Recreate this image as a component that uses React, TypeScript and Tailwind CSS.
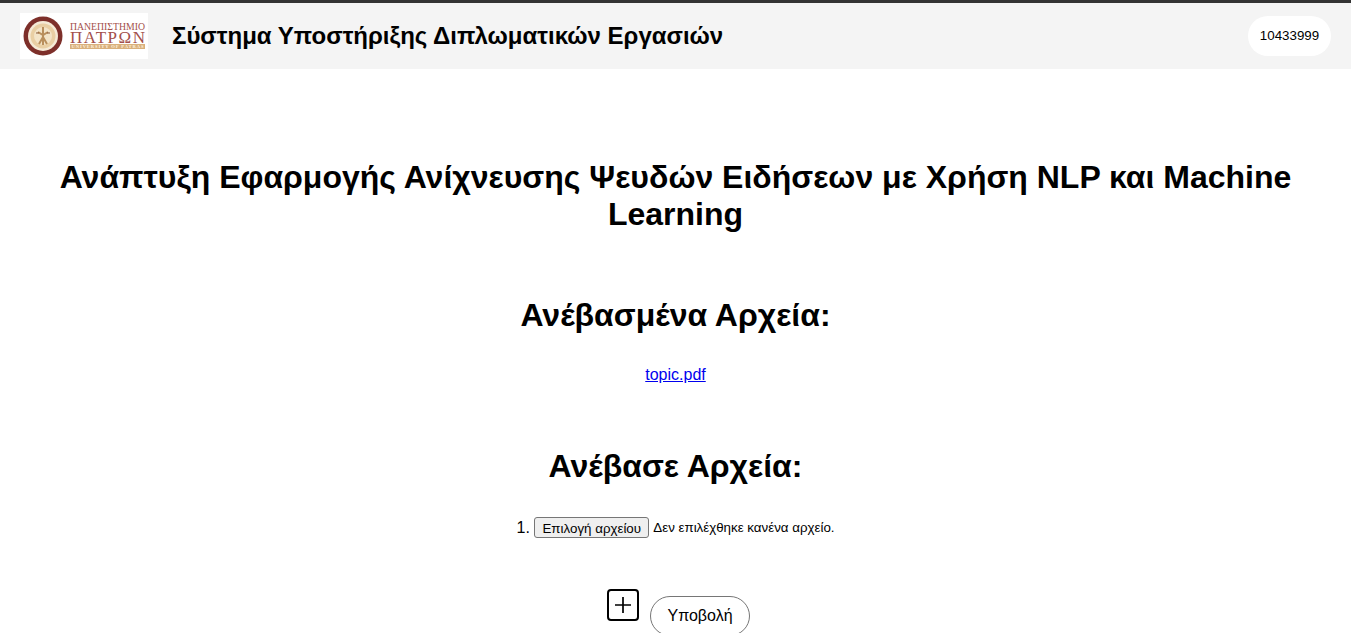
const font = "font-['Liberation_Sans',Arial,sans-serif]";

// University seal + wordmark, drawn small like the original raster logo
const Logo = () => (
  <svg width="128" height="46" viewBox="0 0 128 46" className="shrink-0 bg-white">
    <circle cx="23" cy="23" r="19.5" fill="#7d2f2a" />
    <circle cx="23" cy="23" r="15" fill="#f5ead6" />
    <circle cx="23" cy="23" r="12.5" fill="#e9cfa4" />
    <circle cx="23" cy="23" r="9" fill="#f3e4c8" />
    <path d="M23 14v18M18 19l5 3 5-3M19 31l4-7 4 7" stroke="#b98f5c" strokeWidth="2" fill="none" />
    <path d="M16 20h3M27 20h3" stroke="#8a5a3a" strokeWidth="1.2" />
    <g fontFamily="'Liberation Serif', serif" fill="#a34f4b">
      <text x="50" y="17" fontSize="10" textLength="75" lengthAdjust="spacingAndGlyphs">ΠΑΝΕΠΙΣΤΗΜΙΟ</text>
      <text x="50" y="29.5" fontSize="17" textLength="75">ΠΑΤΡΩΝ</text>
    </g>
    <rect x="50" y="31" width="75" height="5" fill="#d9b07c" />
    <text x="87.5" y="35.3" fontFamily="'Liberation Serif', serif" fontSize="4.6" fontWeight="bold" fill="#fff4e0" textAnchor="middle" textLength="72">
      UNIVERSITY OF PATRAS
    </text>
  </svg>
);

export default function App() {
  return (
    <div className={`${font} bg-white text-black min-h-screen`}>
      <header className="h-[69px] border-t-[3px] border-[#333333] bg-[#f4f4f4] flex items-center justify-between pl-[20px] pr-[20px]">
        <div className="flex items-center gap-[24px]">
          <Logo />
          <h2 className="text-[24px] font-bold">Σύστημα Υποστήριξης Διπλωματικών Εργασιών</h2>
        </div>
        <div className="w-[83px] h-[40px] rounded-[20px] bg-white flex items-center justify-center text-[13.33px]">
          10433999
        </div>
      </header>

      <main className="flex flex-col items-center text-center px-[40px]">
        <h1 className="mt-[90px] text-[32px] leading-[37px] font-bold">
          Ανάπτυξη Εφαρμογής Ανίχνευσης Ψευδών Ειδήσεων με Χρήση NLP και Machine Learning
        </h1>

        <h2 className="mt-[64px] text-[32px] leading-[37px] font-bold">Ανέβασμένα Αρχεία:</h2>
        <a href="#" className="mt-[32px] text-[16px] leading-[18px] text-[#0000ee] underline">
          topic.pdf
        </a>

        <h2 className="mt-[64px] text-[32px] leading-[37px] font-bold">Ανέβασε Αρχεία:</h2>
        <ol className="mt-[32px] list-decimal list-inside text-[16px]">
          <li className="h-[21px] leading-[21px]">
            <button className="h-[21px] w-[115px] align-top rounded-[3px] border border-[#767676] bg-[#efefef] text-[13.33px] text-black">
              Επιλογή αρχείου
            </button>
            <span className="ml-[4px] text-[13.33px] align-top">Δεν επιλέχθηκε κανένα αρχείο.</span>
          </li>
        </ol>

        <div className="mt-[51px] ml-[6px] flex items-start gap-[11px] pb-[10px]">
          <button className="w-[32px] h-[32px] rounded-[4px] border-2 border-black bg-white flex items-center justify-center">
            <svg width="22" height="22" viewBox="0 0 22 22" stroke="black" strokeWidth="1.7">
              <path d="M11 3v16M3 11h16" />
            </svg>
          </button>
          <button className="mt-[7px] w-[100px] h-[40px] rounded-[20px] border border-[#767676] bg-white text-[16px]">
            Υποβολή
          </button>
        </div>
      </main>
    </div>
  );
}
